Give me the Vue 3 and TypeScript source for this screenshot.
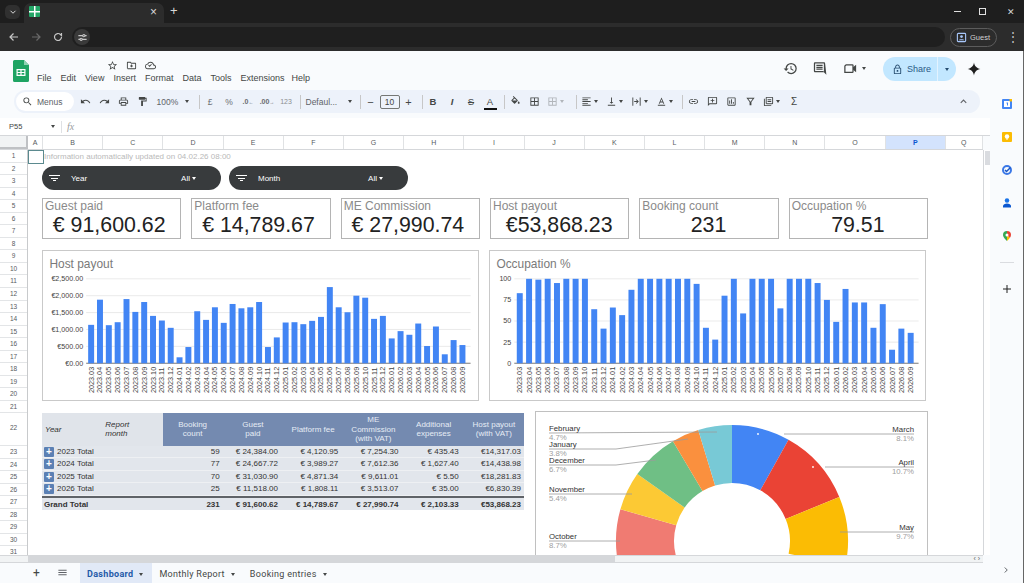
<template>
  <div class="app">
    <!-- browser chrome -->
    <div class="tabstrip">
      <div class="tab-search"><svg viewBox="0 0 24 24" class="ic-chrome"><path d="M6 9l6 6 6-6" class="st" /></svg></div>
      <div class="tab-active">
        <span class="favicon"></span>
        <span class="tab-x">×</span>
      </div>
      <span class="tab-plus">+</span>
      <div class="win-ctrls">
        <span class="win-min"></span>
        <span class="win-max"></span>
        <span class="win-close">✕</span>
      </div>
    </div>
    <div class="browserbar">
      <svg viewBox="0 0 24 24" class="nav-ic"><path d="M20 12H5M11 5l-7 7 7 7" class="st" /></svg>
      <svg viewBox="0 0 24 24" class="nav-ic dim"><path d="M4 12h15M13 5l7 7-7 7" class="st" /></svg>
      <svg viewBox="0 0 24 24" class="nav-ic"><path d="M19 12a7 7 0 1 1-2.2-5.1L19 9V4" class="st" /></svg>
      <div class="omnibox">
        <span class="tune-btn">
          <svg viewBox="0 0 24 24" class="tune"><path d="M3 8h10M17 8h4M3 16h4M11 16h10" class="st" /><circle cx="15" cy="8" r="2.4" class="st" /><circle cx="9" cy="16" r="2.4" class="st" /></svg>
        </span>
      </div>
      <div class="guest">
        <svg viewBox="0 0 24 24" class="guest-ic"><rect x="3" y="3" width="18" height="18" rx="2" class="st" /><circle cx="12" cy="10" r="3" fill="#a8c7fa" /><path d="M6 18c1-3 11-3 12 0" fill="#a8c7fa" /></svg>
        <span>Guest</span>
      </div>
      <span class="kebab">⋮</span>
    </div>

    <div class="page">
      <div class="sheet-app">
        <!-- doc header -->
        <div class="docbar">
          <svg viewBox="0 0 16 22" class="logo">
            <path d="M1.5 0H11l5 5v15.5a1.5 1.5 0 0 1-1.5 1.5h-13A1.5 1.5 0 0 1 0 20.500V1.500A1.500 1.500 0 0 1 1.500 0z" fill="#1fa463" />
            <path d="M11 0l5 5h-5z" fill="#8ed1b1" />
            <path d="M3.500 9h9v7h-9zM4.700 10.200v1.700h2.700v-1.700zm3.900 0v1.700h2.700v-1.700zm-3.900 2.900v1.700h2.700v-1.700zm3.900 0v1.700h2.700v-1.700z" fill="#fff" fill-rule="evenodd" />
          </svg>
          <div class="doc-mid">
            <div class="doc-icons">
              <svg viewBox="0 0 24 24" class="ic"><path :d="icons.star" /></svg>
              <svg viewBox="0 0 24 24" class="ic"><path :d="icons.folder" /></svg>
              <svg viewBox="0 0 24 24" class="ic"><path :d="icons.cloud" /></svg>
            </div>
            <div class="menus">
              <span v-for="m in menus" :key="m">{{ m }}</span>
            </div>
          </div>
          <div class="doc-right">
            <svg viewBox="0 0 24 24" class="ic-lg"><path :d="icons.history" /></svg>
            <svg viewBox="0 0 24 24" class="ic-lg"><path :d="icons.comments" /></svg>
            <span class="meet">
              <svg viewBox="0 0 24 24" class="ic-lg"><path d="M5 6h10a1 1 0 0 1 1 1v10a1 1 0 0 1-1 1H3V8z" fill="none" stroke="#444746" stroke-width="2" /><path d="M16 10l5-4v12l-5-4z" /></svg>
              <i class="caret"></i>
            </span>
            <div class="share">
              <span class="share-main">
                <svg viewBox="0 0 24 24" class="ic-share"><path :d="icons.lock" /></svg>
                Share
              </span>
              <span class="share-drop"><i class="caret"></i></span>
            </div>
            <svg viewBox="0 0 24 24" class="ic-spark"><path d="M12 1c.8 6 5 10.200 11 11-6 .8-10.200 5-11 11-.8-6-5-10.200-11-11 6-.8 10.200-5 11-11z" /></svg>
          </div>
        </div>

        <!-- toolbar -->
        <div class="toolbar">
          <div class="menu-search">
            <svg viewBox="0 0 24 24" class="ic"><path :d="icons.search" /></svg>
            <span>Menus</span>
          </div>
          <span class="tb"><svg viewBox="0 0 24 24" class="ic"><path :d="icons.undo" /></svg></span>
          <span class="tb"><svg viewBox="0 0 24 24" class="ic"><path :d="icons.redo" /></svg></span>
          <span class="tb"><svg viewBox="0 0 24 24" class="ic"><path :d="icons.print" /></svg></span>
          <span class="tb"><svg viewBox="0 0 24 24" class="ic"><path :d="icons.paint" /></svg></span>
          <span class="tb-zoom">100%<i class="caret"></i></span>
          <span class="sep"></span>
          <span class="tb txt">£</span>
          <span class="tb txt">%</span>
          <span class="tb txt small">.0<sub>←</sub></span>
          <span class="tb txt small">.00<sub>→</sub></span>
          <span class="tb txt num">123</span>
          <span class="sep"></span>
          <span class="tb-font">Defaul...<i class="caret"></i></span>
          <span class="sep"></span>
          <span class="tb-step">−</span>
          <span class="size-box">10</span>
          <span class="tb-step">+</span>
          <span class="sep"></span>
          <span class="tb txt bold">B</span>
          <span class="tb txt ital">I</span>
          <span class="tb txt strike">S</span>
          <span class="tb txt color-a">A</span>
          <span class="sep"></span>
          <span class="tb"><svg viewBox="0 0 24 24" class="ic"><path :d="icons.fill" /></svg></span>
          <span class="tb"><svg viewBox="0 0 24 24" class="ic"><path :d="icons.borders" /></svg></span>
          <span class="tb-c dim"><svg viewBox="0 0 24 24" class="ic"><path :d="icons.borders" /></svg><i class="caret"></i></span>
          <span class="sep"></span>
          <span v-for="t in alignTools" :key="t" class="tb-c"><svg viewBox="0 0 24 24" class="ic"><path :d="icons[t]" /></svg><i class="caret"></i></span>
          <span class="sep"></span>
          <span class="tb"><svg viewBox="0 0 24 24" class="ic"><path :d="icons.link" /></svg></span>
          <span class="tb"><svg viewBox="0 0 24 24" class="ic"><path :d="icons.addComment" /></svg></span>
          <span class="tb"><svg viewBox="0 0 24 24" class="ic"><path :d="icons.chart" /></svg></span>
          <span class="tb"><svg viewBox="0 0 24 24" class="ic"><path :d="icons.filter" fill-rule="evenodd" /></svg></span>
          <span class="tb-c"><svg viewBox="0 0 24 24" class="ic"><path :d="icons.views" /></svg><i class="caret"></i></span>
          <span class="tb txt sigma">Σ</span>
          <svg viewBox="0 0 24 24" class="collapse"><path d="M6 15l6-6 6 6" class="st" /></svg>
        </div>

        <!-- formula bar -->
        <div class="formula">
          <span class="name-box">P55</span>
          <i class="caret"></i>
          <span class="fx-sep"></span>
          <span class="fx">fx</span>
        </div>

        <!-- column heads -->
        <div class="colheads">
          <div class="corner"></div>
          <div v-for="c in columns" :key="c" class="colhead" :class="{ selected: c === 'P' }">{{ c }}</div>
        </div>

        <div class="gridarea">
          <div class="rowheads">
            <div v-for="r in 31" :key="r" class="rowhead" :class="{ tall: r === 22 }">{{ r }}</div>
          </div>

          <div class="canvas">
            <div class="a1-cell"></div>
            <div class="note">Information automatically updated on 04.02.26 08:00</div>

            <div class="filters">
              <div v-for="f in filters" :key="f" class="filter-pill">
                <span class="filter-ic"><i></i><i></i><i></i></span>
                <span class="filter-name">{{ f }}</span>
                <span class="filter-val">All<i class="caret white"></i></span>
              </div>
            </div>

            <div class="kpis">
              <div v-for="k in kpis" :key="k.label" class="kpi">
                <div class="kpi-label">{{ k.label }}</div>
                <div class="kpi-value" :class="{ shifted: k.shifted }">{{ k.value }}</div>
              </div>
            </div>

            <div class="charts">
              <div v-for="c in charts" :key="c.title" class="chart-card">
                <svg class="chart-svg" viewBox="0 0 437 150">
                  <text x="6" y="17" class="chart-title">{{ c.title }}</text>
                  <g v-for="t in c.ticks" :key="t.label">
                    <line :x1="c.x0" :x2="c.x1" :y1="t.y" :y2="t.y" :class="t.y === baseY ? 'axis' : 'gridline'" />
                    <text :x="c.x0 - 3" :y="t.y + 2.500" text-anchor="end" class="tick">{{ t.label }}</text>
                  </g>
                  <g v-for="b in c.bars" :key="b.label">
                    <rect :x="b.x - 3" :y="b.y" width="6" :height="baseY - b.y" fill="#4285f4" />
                    <text :transform="`translate(${b.x + 2.500},${baseY + 30}) rotate(-90)`" class="bar-label">{{ b.label }}</text>
                  </g>
                </svg>
              </div>
            </div>

            <div class="bottom">
              <div class="pivot">
                <div class="pv-row pv-head">
                  <div class="pv-light ital">Year</div>
                  <div class="pv-light ital">Report<br />month</div>
                  <div v-for="h in pivotHeads" :key="h" class="pv-dark">{{ h }}</div>
                </div>
                <div v-for="r in pivotRows" :key="r.label" class="pv-row pv-body">
                  <div class="pv-label">
                    <span class="pv-plus">+</span>{{ r.label }}
                  </div>
                  <div v-for="(v, i) in r.values" :key="i" class="pv-num" :class="{ money: i > 0 && i < 5 }">{{ v }}</div>
                </div>
                <div class="pv-row pv-body pv-total">
                  <div class="pv-label">Grand Total</div>
                  <div v-for="(v, i) in pivotTotal" :key="i" class="pv-num" :class="{ money: i > 0 && i < 5 }">{{ v }}</div>
                </div>
              </div>

              <div class="donut-card">
                <svg class="donut-svg" viewBox="0 0 391 178">
                  <path v-for="s in slices" :key="s.color" :d="s.d" :fill="s.color" />
                  <g v-for="l in callouts" :key="l.name">
                    <polyline :points="l.line" fill="none" stroke="#9a9a9a" stroke-width="0.8" />
                    <circle v-if="l.dot" :cx="l.dot[0]" :cy="l.dot[1]" r="0.9" fill="#fff" />
                    <text :x="l.x" :y="l.y - 1.700" :text-anchor="l.anchor" class="dn-name">{{ l.name }}</text>
                    <text :x="l.x" :y="l.y + 7" :text-anchor="l.anchor" class="dn-pct">{{ l.pct }}</text>
                  </g>
                </svg>
              </div>
            </div>
          </div>

          <div class="vscroll">
            <div class="vthumb"></div>
          </div>
        </div>

        <div class="hscroll">
          <div class="hthumb"></div>
          <span class="harrows">‹ ›</span>
        </div>

        <!-- sheet tabs -->
        <div class="sheet-tabs">
          <span class="st-plus">+</span>
          <svg viewBox="0 0 24 24" class="st-menu"><path d="M3 6h18v2H3zm0 5h18v2H3zm0 5h18v2H3z" /></svg>
          <div class="st-tab active">Dashboard<i class="caret"></i></div>
          <div class="st-tab">Monthly Report<i class="caret"></i></div>
          <div class="st-tab">Booking entries<i class="caret"></i></div>
        </div>
      </div>

      <!-- side panel -->
      <div class="side">
        <svg viewBox="0 0 24 24" class="side-ic"><rect x="2" y="2" width="20" height="20" rx="2" fill="#4285f4" /><rect x="6" y="6" width="12" height="12" fill="#fff" /><path d="M17 2h5v5h-5z" fill="#fbbc04" /><path d="M11 9h3v6h-2v-4h-1z" fill="#4285f4" /></svg>
        <svg viewBox="0 0 24 24" class="side-ic"><rect x="2" y="2" width="20" height="20" rx="2" fill="#fbbc04" /><circle cx="12" cy="11" r="4.500" fill="#fff" /><rect x="10" y="15" width="4" height="2" fill="#fff" /></svg>
        <svg viewBox="0 0 24 24" class="side-ic"><circle cx="12" cy="12" r="8" fill="none" stroke="#3b78e7" stroke-width="4" /><path d="M8 12l3 3 8-8" fill="none" stroke="#1a56c4" stroke-width="3" /></svg>
        <svg viewBox="0 0 24 24" class="side-ic"><circle cx="12" cy="7" r="4.500" fill="#1a73e8" /><path d="M4 21v-3c0-3 4-5 8-5s8 2 8 5v3z" fill="#0b57d0" /></svg>
        <svg viewBox="0 0 24 24" class="side-ic"><path d="M12 2a8 8 0 0 0-8 8c0 5 8 12 8 12z" fill="#34a853" /><path d="M12 2a8 8 0 0 1 8 8c0 2-1 4-2.500 6L12 10z" fill="#ea4335" /><path d="M12 22c2-2 4-4 5.500-6L12 10z" fill="#fbbc04" /><circle cx="12" cy="10" r="3" fill="#fff" /></svg>
        <span class="side-div"></span>
        <svg viewBox="0 0 24 24" class="side-plus"><path d="M11 4h2v7h7v2h-7v7h-2v-7H4v-2h7z" /></svg>
        <svg viewBox="0 0 24 24" class="side-more"><path d="M9 6l6 6-6 6" class="st" /></svg>
      </div>
    </div>
  </div>
</template>

<script setup lang="ts">
interface Chart {
  title: string
  x0: number
  x1: number
  ticks: { label: string; y: number }[]
  bars: { label: string; x: number; y: number }[]
}

interface Callout {
  name: string
  pct: string
  x: number
  y: number
  anchor: string
  line: string
  dot?: number[]
}

const icons: Record<string, string> = {
  star: 'M22 9.240l-7.190-.620L12 2 9.190 8.630 2 9.240l5.460 4.730L5.820 21 12 17.270 18.180 21l-1.630-7.030L22 9.240zM12 15.400l-3.760 2.270 1-4.280-3.320-2.880 4.380-.380L12 6.100l1.710 4.040 4.380.380-3.320 2.880 1 4.280L12 15.400z',
  folder: 'M20 6h-8l-2-2H4c-1.100 0-2 .9-2 2v12c0 1.100.9 2 2 2h16c1.100 0 2-.9 2-2V8c0-1.100-.9-2-2-2zm0 12H4V6h5.170l2 2H20v10zM11 10h2v2h2v2h-2v2h-2v-2H9v-2h2z',
  cloud: 'M19.350 10.040A7.490 7.490 0 0 0 12 4C9.110 4 6.600 5.640 5.350 8.040A5.994 5.994 0 0 0 0 14c0 3.310 2.690 6 6 6h13c2.760 0 5-2.240 5-5 0-2.640-2.050-4.780-4.650-4.960zM19 18H6c-2.210 0-4-1.790-4-4 0-2.050 1.530-3.760 3.560-3.970l1.070-.110.5-.950A5.469 5.469 0 0 1 12 6c2.620 0 4.880 1.860 5.390 4.430l.3 1.500 1.530.110A2.980 2.980 0 0 1 22 15c0 1.650-1.350 3-3 3zM10 15l5-5-1.400-1.400L10 12.200 8.400 10.600 7 12z',
  history: 'M13 3a9 9 0 0 0-9 9H1l3.890 3.890.07.140L9 12H6c0-3.870 3.130-7 7-7s7 3.130 7 7-3.130 7-7 7c-1.930 0-3.680-.790-4.940-2.060l-1.420 1.420A8.954 8.954 0 0 0 13 21a9 9 0 0 0 0-18zm-1 5v5l4.250 2.520.770-1.280-3.520-2.090V8z',
  comments: 'M21 4c0-1.100-.9-2-2-2H5c-1.100 0-2 .9-2 2v12c0 1.100.9 2 2 2h14l4 4zM19 4v13.200L17.800 16H5V4zM7 12h10v2H7zm0-3h10v2H7zm0-3h10v2H7z',
  lock: 'M18 8h-1V6c0-2.760-2.240-5-5-5S7 3.240 7 6v2H6c-1.100 0-2 .9-2 2v10c0 1.100.9 2 2 2h12c1.100 0 2-.9 2-2V10c0-1.100-.9-2-2-2zM9 6c0-1.660 1.340-3 3-3s3 1.340 3 3v2H9V6zm9 14H6V10h12v10zm-6-3c1.100 0 2-.9 2-2s-.9-2-2-2-2 .9-2 2 .9 2 2 2z',
  search: 'M15.500 14h-.790l-.280-.270A6.470 6.470 0 0 0 16 9.500 6.500 6.500 0 1 0 9.500 16c1.610 0 3.090-.590 4.230-1.570l.270.280v.790l5 4.990L20.490 19l-4.990-5zm-6 0C7.010 14 5 11.990 5 9.500S7.010 5 9.500 5 14 7.010 14 9.500 11.990 14 9.500 14z',
  undo: 'M12.500 8c-2.650 0-5.050.990-6.900 2.600L2 7v9h9l-3.620-3.620c1.390-1.160 3.160-1.880 5.120-1.880 3.540 0 6.550 2.310 7.600 5.500l2.370-.780C21.080 11.030 17.150 8 12.500 8z',
  redo: 'M18.400 10.600C16.550 8.990 14.150 8 11.500 8c-4.650 0-8.580 3.030-9.960 7.220L3.900 16c1.050-3.190 4.050-5.500 7.600-5.500 1.950 0 3.730.720 5.120 1.880L13 16h9V7l-3.600 3.600z',
  print: 'M19 8h-1V3H6v5H5c-1.660 0-3 1.340-3 3v6h4v4h12v-4h4v-6c0-1.660-1.340-3-3-3zM8 5h8v3H8V5zm8 12v2H8v-4h8v2zm2-2v-2H6v2H4v-4c0-.550.450-1 1-1h14c.550 0 1 .450 1 1v4h-2z',
  paint: 'M18 4V3c0-.550-.450-1-1-1H5c-.550 0-1 .450-1 1v4c0 .550.450 1 1 1h12c.550 0 1-.450 1-1V6h1v4H9v11c0 .550.450 1 1 1h2c.550 0 1-.450 1-1v-9h8V4h-3z',
  fill: 'M16.560 8.940L7.620 0 6.210 1.410l2.380 2.380-5.150 5.150c-.590.590-.590 1.540 0 2.120l5.500 5.500c.290.290.680.440 1.060.440s.770-.150 1.060-.440l5.500-5.500c.590-.580.590-1.530 0-2.120zM5.210 10L10 5.210 14.790 10H5.210zM19 11.500s-2 2.170-2 3.500c0 1.100.9 2 2 2s2-.9 2-2c0-1.330-2-3.500-2-3.500z',
  borders: 'M3 3v18h18V3H3zm8 16H5v-6h6v6zm0-8H5V5h6v6zm8 8h-6v-6h6v6zm0-8h-6V5h6v6z',
  align: 'M3 21h18v-2H3v2zm0-4h12v-2H3v2zm0-4h18v-2H3v2zm0-4h12V7H3v2zm0-6v2h18V3H3z',
  valign: 'M16 13h-3V3h-2v10H8l4 4 4-4zM4 19v2h16v-2H4z',
  wrap: 'M3 3v18h2V3H3zm16 0v18h2V3h-2zM7 11h6.170l-2.580-2.590L12 7l5 5-5 5-1.410-1.410L13.170 13H7v-2z',
  rotate: 'M12 3l-6 14h2l1.300-3h5.400l1.300 3h2L12 3zm-2 9l2-5 2 5h-4zM4 19v2h16v-2H4z',
  link: 'M3.900 12c0-1.710 1.390-3.100 3.100-3.100h4V7H7c-2.760 0-5 2.240-5 5s2.240 5 5 5h4v-1.900H7c-1.710 0-3.100-1.390-3.100-3.100zM8 13h8v-2H8v2zm9-6h-4v1.900h4c1.710 0 3.100 1.390 3.100 3.100s-1.390 3.100-3.100 3.100h-4V17h4c2.760 0 5-2.240 5-5s-2.240-5-5-5z',
  addComment: 'M20 2H4c-1.100 0-2 .9-2 2v18l4-4h14c1.100 0 2-.9 2-2V4c0-1.100-.9-2-2-2zm0 14H5.200L4 17.200V4h16v12zM13 6h-2v3H8v2h3v3h2v-3h3V9h-3z',
  chart: 'M19 3H5c-1.100 0-2 .9-2 2v14c0 1.100.9 2 2 2h14c1.100 0 2-.9 2-2V5c0-1.100-.9-2-2-2zm0 16H5V5h14v14zM7 10h2v7H7zm4-3h2v10h-2zm4 6h2v4h-2z',
  filter: 'M3 4h18l-7 9v7h-4v-7L3 4zm4 2l5 6.500L17 6H7z',
  views: 'M4 6H2v14c0 1.100.9 2 2 2h14v-2H4V6zm16-4H8c-1.100 0-2 .9-2 2v12c0 1.100.9 2 2 2h12c1.100 0 2-.9 2-2V4c0-1.100-.9-2-2-2zm0 14H8V4h12v12zM10 7h8v2h-8zm0 4h8v2h-8z',
}

const menus = ['File', 'Edit', 'View', 'Insert', 'Format', 'Data', 'Tools', 'Extensions', 'Help']
const alignTools = ['align', 'valign', 'wrap', 'rotate']
const columns = 'ABCDEFGHIJKLMNOPQ'.split('')
const filters = ['Year', 'Month']

const kpis = [
  { label: 'Guest paid', value: '€ 91,600.62', shifted: true },
  { label: 'Platform fee', value: '€ 14,789.67', shifted: true },
  { label: 'ME Commission', value: '€ 27,990.74', shifted: true },
  { label: 'Host payout', value: '€53,868.23', shifted: false },
  { label: 'Booking count', value: '231', shifted: false },
  { label: 'Occupation %', value: '79.51', shifted: false },
]

// 图表共用的基线
const baseY = 113
const plotH = 85

const months: string[] = []
for (const [year, from, to] of [[2023, 3, 12], [2024, 1, 12], [2025, 1, 12], [2026, 1, 9]]) {
  for (let m = from; m <= to; m++) months.push(`${year}.${String(m).padStart(2, '0')}`)
}

const payout = [
  1137, 1882, 1127, 1215, 1900, 1520, 1813, 1402, 1265, 1049,
  176, 480, 1540, 1284, 1657, 1196, 1755, 1627, 1657, 1813, 480, 765,
  1206, 1215, 1157, 1255, 1372, 2255, 1657, 1510, 2000, 1941, 1314, 1402,
  735, 951, 843, 1176, 510, 1088, 265, 686, 539,
]
const occupation = [
  83, 100, 99, 100, 95, 100, 100, 100, 64, 41,
  66, 57, 87, 100, 100, 100, 100, 100, 100, 94, 42, 28,
  80, 100, 59, 100, 100, 100, 65, 100, 100, 100, 95, 75,
  49, 88, 72, 72, 42, 70, 16, 41, 36,
]

function buildChart(title: string, values: number[], max: number, tickLabels: string[], x0: number, x1: number, first: number, step: number): Chart {
  return {
    title,
    x0,
    x1,
    ticks: tickLabels.map((label, i) => ({ label, y: baseY - (plotH * i) / (tickLabels.length - 1) })),
    bars: values.map((v, i) => ({ label: months[i], x: first + step * i, y: baseY - (v / max) * plotH })),
  }
}

const charts: Chart[] = [
  buildChart('Host payout', payout, 2500, ['€0.00', '€500.00', '€1,000.00', '€1,500.00', '€2,000.00', '€2,500.00'], 43, 430, 48, 8.9),
  buildChart('Occupation %', occupation, 100, ['0', '25', '50', '75', '100'], 24, 431, 29.5, 9.37),
]

const pivotHeads = ['Booking\ncount', 'Guest\npaid', 'Platform fee', 'ME\nCommission\n(with VAT)', 'Additional\nexpenses', 'Host payout\n(with VAT)']
const pivotRows = [
  { label: '2023 Total', values: ['59', '€ 24,384.00', '€ 4,120.95', '€ 7,254.30', '€ 435.43', '€14,317.03'] },
  { label: '2024 Total', values: ['77', '€ 24,667.72', '€ 3,989.27', '€ 7,612.36', '€ 1,627.40', '€14,438.98'] },
  { label: '2025 Total', values: ['70', '€ 31,030.90', '€ 4,871.34', '€ 9,611.01', '€ 5.50', '€18,281.83'] },
  { label: '2026 Total', values: ['25', '€ 11,518.00', '€ 1,808.11', '€ 3,513.07', '€ 35.00', '€6,830.39'] },
]
const pivotTotal = ['231', '€ 91,600.62', '€ 14,789.67', '€ 27,990.74', '€ 2,103.33', '€53,868.23']

// 环形图：从十月开始顺时针
const cx = 196
const cy = 129
const rOuter = 116
const rInner = 58
const slicesData = [
  { pct: 8.7, color: '#f07b72' },
  { pct: 5.4, color: '#fcc934' },
  { pct: 6.7, color: '#6fbf85' },
  { pct: 3.8, color: '#fa903e' },
  { pct: 4.7, color: '#78c9d6' },
  { pct: 8.1, color: '#4285f4' },
  { pct: 10.7, color: '#ea4335' },
  { pct: 9.7, color: '#fbbc04' },
]

function polar(r: number, deg: number): string {
  const a = (deg * Math.PI) / 180
  return `${(cx + r * Math.sin(a)).toFixed(2)} ${(cy - r * Math.cos(a)).toFixed(2)}`
}

let angle = -(8.7 + 5.4 + 6.7 + 3.8 + 4.7) * 3.6
const slices = slicesData.map((s) => {
  const start = angle
  angle += s.pct * 3.6
  const d = `M${polar(rOuter, start)}A${rOuter} ${rOuter} 0 0 1 ${polar(rOuter, angle)}L${polar(rInner, angle)}A${rInner} ${rInner} 0 0 0 ${polar(rInner, start)}Z`
  return { d, color: s.color }
})

const callouts: Callout[] = [
  { name: 'February', pct: '4.7%', x: 13, y: 21, anchor: 'start', line: '13,21 181,20' },
  { name: 'January', pct: '3.8%', x: 13, y: 37, anchor: 'start', line: '13,37 80,37 152,27' },
  { name: 'December', pct: '6.7%', x: 13, y: 53, anchor: 'start', line: '13,53 80,53 120,48' },
  { name: 'November', pct: '5.4%', x: 13, y: 82, anchor: 'start', line: '13,82 96,82' },
  { name: 'October', pct: '8.7%', x: 13, y: 129, anchor: 'start', line: '13,129 84,129' },
  { name: 'March', pct: '8.1%', x: 378, y: 22, anchor: 'end', line: '378,22 248,22', dot: [222, 22] },
  { name: 'April', pct: '10.7%', x: 378, y: 55, anchor: 'end', line: '378,55 289,55', dot: [277, 55] },
  { name: 'May', pct: '9.7%', x: 378, y: 120, anchor: 'end', line: '378,120 304,120' },
]
</script>

<style>
html,
body {
  margin: 0;
  padding: 0;
  background: #fff;
  overflow: hidden;
}
</style>

<style scoped>
.app {
  width: 1024px;
  height: 583px;
  display: flex;
  flex-direction: column;
  overflow: hidden;
  font-family: "Liberation Sans", Arial, sans-serif;
  color: #444746;
}

.st {
  fill: none;
  stroke: currentColor;
  stroke-width: 2.4;
}

/* 浏览器标签栏 */
.tabstrip {
  height: 23px;
  flex-shrink: 0;
  background: #1e1e1e;
  display: flex;
  align-items: flex-end;
  color: #d8d8d8;
}

.tab-search {
  width: 15px;
  height: 14px;
  margin: 0 4px 4px 5px;
  border-radius: 5px;
  background: #303030;
  display: flex;
  align-items: center;
  justify-content: center;
}

.ic-chrome {
  width: 10px;
  height: 10px;
}

.tab-active {
  width: 140px;
  height: 20px;
  background: #2c2c2c;
  border-radius: 7px 7px 0 0;
  display: flex;
  align-items: center;
  justify-content: space-between;
  padding: 0 7px 3px 5px;
  box-sizing: border-box;
}

.favicon {
  width: 11px;
  height: 11px;
  border-radius: 1px;
  background:
    linear-gradient(#fff, #fff) center / 100% 1.5px no-repeat,
    linear-gradient(#fff, #fff) center / 1.5px 100% no-repeat,
    #23a566;
}

.tab-x {
  font-size: 12px;
  line-height: 12px;
}

.tab-plus {
  font-size: 13px;
  line-height: 13px;
  margin: 0 0 6px 6px;
}

.win-ctrls {
  margin-left: auto;
  width: 70px;
  height: 23px;
  display: flex;
  align-items: center;
  justify-content: space-between;
  padding-right: 9px;
  box-sizing: border-box;
}

.win-min {
  width: 7px;
  height: 1px;
  background: #e0e0e0;
}

.win-max {
  width: 7px;
  height: 7px;
  border: 1px solid #e0e0e0;
  box-sizing: border-box;
  margin-left: -3px;
}

.win-close {
  font-size: 9px;
}

.browserbar {
  height: 28px;
  flex-shrink: 0;
  background: #2c2c2c;
  display: flex;
  align-items: center;
  color: #c7c7c7;
  padding-left: 8px;
  box-sizing: border-box;
}

.nav-ic {
  width: 12px;
  height: 12px;
  margin-right: 10px;
}

.nav-ic.dim {
  opacity: 0.4;
}

.omnibox {
  width: 873px;
  height: 20px;
  margin-left: -2px;
  border-radius: 10px;
  background: #1f1f1f;
  display: flex;
  align-items: center;
}

.tune-btn {
  width: 16px;
  height: 16px;
  margin-left: 2px;
  border-radius: 50%;
  background: #3a3a3a;
  display: flex;
  align-items: center;
  justify-content: center;
}

.tune {
  width: 11px;
  height: 11px;
}

.guest {
  width: 47px;
  height: 19px;
  margin-left: 5px;
  border: 1px solid #5c5c5c;
  border-radius: 10px;
  box-sizing: border-box;
  display: flex;
  align-items: center;
  gap: 3px;
  padding-left: 5px;
  font-size: 7.500px;
  color: #d0d0d0;
}

.guest-ic {
  width: 11px;
  height: 11px;
  color: #a8c7fa;
}

.kebab {
  margin-left: 10px;
  font-size: 12px;
}

.page {
  flex: 1;
  min-height: 0;
  display: flex;
  background: #f9fbfd;
}

.sheet-app {
  width: 990px;
  flex-shrink: 0;
  display: flex;
  flex-direction: column;
}

.ic {
  width: 11px;
  height: 11px;
  fill: #444746;
  flex-shrink: 0;
}

.caret {
  display: inline-block;
  width: 0;
  height: 0;
  border-left: 2.500px solid transparent;
  border-right: 2.500px solid transparent;
  border-top: 3px solid #444746;
  vertical-align: middle;
}

.caret.white {
  border-top-color: #fff;
  margin-left: 2px;
}

/* 文档头部 */
.docbar {
  height: 39px;
  flex-shrink: 0;
  display: flex;
  padding-left: 13px;
  box-sizing: border-box;
}

.logo {
  width: 16px;
  height: 22px;
  margin-top: 9px;
}

.doc-mid {
  margin-left: 8px;
}

.doc-icons {
  display: flex;
  gap: 8px;
  margin: 9px 0 0 70px;
}

.doc-icons .ic {
  width: 11px;
  height: 11px;
}

.menus {
  display: flex;
  gap: 9px;
  font-size: 9px;
  margin-top: 2px;
  color: #444746;
}

.menus span:last-child {
  margin-left: -2px;
}

.doc-right {
  margin-left: auto;
  display: flex;
  align-items: flex-start;
  padding: 6px 6px 0 0;
}

.ic-lg {
  width: 15px;
  height: 15px;
  fill: #444746;
  margin-top: 4px;
  margin-right: 14px;
}

.meet {
  display: flex;
  margin: 0 17px 0 2px;
}

.meet .ic-lg {
  margin-right: 4px;
}

.meet .caret {
  margin-top: 10px;
}

.share {
  width: 73px;
  height: 24px;
  border-radius: 12px;
  background: #c2e7ff;
  display: flex;
  align-items: center;
  font-size: 9px;
  color: #2a5a86;
}

.share-main {
  flex: 1;
  display: flex;
  align-items: center;
  gap: 4px;
  padding-left: 9px;
  border-right: 1px solid #e3f3ff;
  height: 100%;
}

.ic-share {
  width: 11px;
  height: 11px;
  fill: #264d70;
}

.share-drop {
  width: 18px;
  display: flex;
  justify-content: center;
}

.share-drop .caret {
  border-top-color: #264d70;
}

.ic-spark {
  width: 14px;
  height: 14px;
  margin: 5px 3px 0 11px;
  fill: #1f1f1f;
}

/* 工具栏 */
.toolbar {
  height: 23px;
  flex-shrink: 0;
  margin-left: 14px;
  width: 966px;
  background: #edf2fa;
  border-radius: 12px;
  display: flex;
  align-items: center;
  font-size: 8.500px;
}

.menu-search {
  width: 58px;
  height: 19px;
  margin: 0 1.500px 0 2px;
  background: #fff;
  border-radius: 10px;
  display: flex;
  align-items: center;
  gap: 4px;
  padding-left: 6px;
  box-sizing: border-box;
  color: #606368;
}

.tb {
  width: 19px;
  height: 18px;
  display: flex;
  align-items: center;
  justify-content: center;
  flex-shrink: 0;
}

.tb.txt {
  font-size: 8.500px;
  color: #6a6d70;
}

.tb.small {
  font-size: 7px;
  font-weight: 700;
}

.tb.small sub {
  font-size: 5px;
  line-height: 0;
}

.tb.num {
  font-size: 7px;
  color: #8a8d90;
}

.tb.bold {
  font-weight: 700;
  color: #444746;
  font-size: 9.500px;
}

.tb.ital {
  font-style: italic;
  font-weight: 700;
  color: #444746;
  font-size: 9.500px;
}

.tb.strike {
  text-decoration: line-through;
  color: #444746;
  font-size: 9.500px;
}

.tb.color-a {
  color: #444746;
  font-size: 9.500px;
  background: linear-gradient(#111, #111) center 15px / 13px 2px no-repeat;
}

.tb.sigma {
  font-size: 10px;
  color: #444746;
}

.tb-zoom {
  width: 43px;
  display: flex;
  align-items: center;
  justify-content: space-between;
  padding: 0 6px 0 5px;
  box-sizing: border-box;
  color: #606368;
  flex-shrink: 0;
}

.sep {
  width: 1px;
  height: 14px;
  background: #c7c7c7;
  margin: 0 1px 0 4px;
  flex-shrink: 0;
}

.tb-font {
  width: 54px;
  display: flex;
  align-items: center;
  justify-content: space-between;
  padding: 0 4px;
  box-sizing: border-box;
  color: #606368;
  flex-shrink: 0;
}

.tb-step {
  width: 18px;
  text-align: center;
  font-size: 11px;
  flex-shrink: 0;
}

.size-box {
  width: 20px;
  height: 14px;
  border: 1px solid #747775;
  border-radius: 2px;
  box-sizing: border-box;
  display: flex;
  align-items: center;
  justify-content: center;
  font-size: 8.500px;
  flex-shrink: 0;
}

.tb-c {
  width: 25px;
  height: 18px;
  display: flex;
  align-items: center;
  justify-content: flex-start;
  gap: 2px;
  padding-left: 3.500px;
  box-sizing: border-box;
  flex-shrink: 0;
}

.tb-c.dim {
  opacity: 0.35;
  width: 28px;
}

.collapse {
  width: 11px;
  height: 11px;
  margin-left: auto;
  margin-right: 11px;
  color: #606368;
}

/* 公式栏 */
.formula {
  height: 18px;
  margin-top: 5px;
  flex-shrink: 0;
  background: #fff;
  border-bottom: 1px solid #d5d7da;
  box-sizing: border-box;
  display: flex;
  align-items: center;
  font-size: 7.500px;
}

.name-box {
  width: 45px;
  padding-left: 9px;
  box-sizing: border-box;
  flex-shrink: 0;
}

.formula .caret {
  margin-left: 6px;
}

.fx-sep {
  width: 1px;
  height: 12px;
  background: #dfe1e4;
  margin-left: 6px;
}

.fx {
  margin-left: 5px;
  font-style: italic;
  font-family: "Liberation Serif", serif;
  font-size: 10px;
  color: #9a9da0;
}

/* 列头 */
.colheads {
  height: 14px;
  flex-shrink: 0;
  background: #fff;
  display: grid;
  grid-template-columns: 28px 15px repeat(15, 60.200px) 37px;
  border-bottom: 1px solid #d5d7da;
  box-sizing: border-box;
  width: 983px;
}

.corner {
  background: #f1f3f4;
  border-right: 2px solid #bfc1c4;
  border-bottom: 2px solid #bfc1c4;
  box-sizing: border-box;
}

.colhead {
  font-size: 7px;
  line-height: 13px;
  text-align: center;
  color: #575a5e;
  border-right: 1px solid #e0e2e4;
  box-sizing: border-box;
}

.colhead.selected {
  background: #d3e3fd;
  color: #0b57d0;
  font-weight: 700;
}

.gridarea {
  flex: 1;
  min-height: 0;
  display: flex;
  background: #fff;
  overflow: hidden;
}

.rowheads {
  width: 28px;
  flex-shrink: 0;
  border-right: 1px solid #c8cacc;
  box-sizing: border-box;
}

.rowhead {
  height: 12.550px;
  font-size: 6.500px;
  line-height: 12px;
  text-align: center;
  color: #575a5e;
  border-bottom: 1px solid #e3e5e7;
  box-sizing: border-box;
}

.rowhead.tall {
  height: 32.500px;
  line-height: 30px;
}

/* 表格上的浮动内容 */
.canvas {
  position: relative;
  width: 955px;
  flex-shrink: 0;
  padding-left: 14px;
  box-sizing: border-box;
  overflow: hidden;
}

.a1-cell {
  position: absolute;
  left: 0;
  top: 0;
  width: 14px;
  height: 12px;
  border: 1px solid #5b8a8f;
  box-sizing: content-box;
}

.note {
  height: 16px;
  padding-left: 2px;
  font-size: 8px;
  line-height: 13px;
  color: #b9b9b9;
}

.filters {
  display: flex;
  gap: 8px;
}

.filter-pill {
  width: 179px;
  height: 24px;
  background: #383b3d;
  border-radius: 12px;
  display: flex;
  align-items: center;
  color: #fff;
  font-size: 8px;
  padding-left: 7px;
  box-sizing: border-box;
}

.filter-ic {
  width: 11px;
  display: flex;
  flex-direction: column;
  align-items: center;
  gap: 1.500px;
}

.filter-ic i {
  display: block;
  height: 1px;
  background: #fff;
}

.filter-ic i:nth-child(1) {
  width: 11px;
}

.filter-ic i:nth-child(2) {
  width: 7px;
}

.filter-ic i:nth-child(3) {
  width: 3px;
}

.filter-name {
  margin-left: 11px;
}

.filter-val {
  margin-left: auto;
  margin-right: 25px;
}

.kpis {
  display: grid;
  grid-template-columns: repeat(6, 1fr);
  gap: 10px;
  width: 886px;
  margin-top: 8px;
}

.kpi {
  height: 41px;
  border: 1px solid #b4b4b4;
  box-sizing: border-box;
  padding-left: 2px;
}

.kpi-label {
  font-size: 12px;
  line-height: 14px;
  color: #8a8a8a;
}

.kpi-value {
  font-size: 21.330px;
  line-height: 24px;
  padding-right: 3px;
  text-align: center;
  color: #222;
}

.kpi-value.shifted {
  padding-right: 7px;
}

.charts {
  display: grid;
  grid-template-columns: repeat(2, 437px);
  gap: 10px;
  margin-top: 11px;
}

.chart-card {
  height: 151px;
  border: 1px solid #c9c9c9;
  box-sizing: border-box;
  background: #fff;
}

.chart-svg {
  display: block;
  width: 435px;
  height: 149px;
}

.chart-title {
  font-size: 12px;
  fill: #7a7a7a;
}

.tick {
  font-size: 7.200px;
  fill: #444;
}

.bar-label {
  font-size: 7.300px;
  fill: #444;
}

.gridline {
  stroke: #e4e4e4;
  stroke-width: 0.800;
}

.axis {
  stroke: #555;
  stroke-width: 0.800;
}

.bottom {
  display: flex;
  align-items: flex-start;
  gap: 11px;
  margin-top: 10px;
}

/* 数据透视表 */
.pivot {
  width: 482px;
  margin-top: 2px;
  font-size: 8px;
  color: #333;
}

.pv-row {
  display: grid;
  grid-template-columns: repeat(8, 1fr);
}

.pv-head {
  height: 32.500px;
}

.pv-light {
  background: #e0e4ea;
  display: flex;
  align-items: center;
  padding-left: 3px;
  line-height: 9.500px;
  font-size: 8px;
}

.ital {
  font-style: italic;
}

.pv-dark {
  background: #748ab0;
  color: #e6ecf5;
  display: flex;
  align-items: center;
  justify-content: center;
  text-align: center;
  white-space: pre-line;
  line-height: 9.500px;
  font-size: 8px;
}

.pv-body {
  height: 12.550px;
  line-height: 12px;
  background: #e2e6ec;
  border-bottom: 1px solid #eef0f3;
  box-sizing: border-box;
}

.pv-label {
  grid-column: span 2;
  display: flex;
  align-items: center;
  white-space: nowrap;
  padding-left: 2px;
}

.pv-plus {
  width: 10px;
  height: 10px;
  margin-right: 3px;
  background: #5b80b4;
  color: #fff;
  font-size: 10px;
  font-weight: 700;
  line-height: 10px;
  text-align: center;
  border-radius: 1px;
}

.pv-num {
  text-align: right;
  padding-right: 3px;
  white-space: nowrap;
}

.pv-num.money {
  padding-right: 5px;
}

.pv-total {
  height: 14px;
  line-height: 13px;
  font-weight: 700;
  border-top: 2px solid #5f6368;
  border-bottom: none;
}

/* 环形图 */
.donut-card {
  width: 393px;
  height: 180px;
  flex-shrink: 0;
  border: 1px solid #c0c0c0;
  box-sizing: border-box;
}

.donut-svg {
  display: block;
  width: 391px;
  height: 178px;
}

.dn-name {
  font-size: 7.800px;
  fill: #333;
}

.dn-pct {
  font-size: 7.800px;
  fill: #a0a0a0;
}

.vscroll {
  flex: 1;
  border-left: 1px solid #d5d7da;
  padding: 1px 0 0 1px;
}

.vthumb {
  width: 5px;
  height: 14px;
  background: #dadce0;
}

.hscroll {
  height: 8px;
  flex-shrink: 0;
  background: #f1f3f4;
  border-top: 1px solid #d5d7da;
  border-bottom: 1px solid #d5d7da;
  padding-left: 28px;
  width: 983px;
  box-sizing: border-box;
  display: flex;
  align-items: center;
}

.hthumb {
  width: 587px;
  height: 6px;
  background: #d5d7da;
}

.harrows {
  margin-left: auto;
  font-size: 7px;
  line-height: 6px;
  padding-right: 3px;
  color: #606368;
}

/* 工作表标签 */
.sheet-tabs {
  height: 20px;
  flex-shrink: 0;
  display: flex;
  align-items: stretch;
  font-family: Roboto, "Liberation Sans", sans-serif;
  font-size: 9px;
  letter-spacing: 0.300px;
  color: #444746;
}

.st-plus {
  margin-left: 33px;
  font-size: 12px;
  line-height: 20px;
}

.st-menu {
  width: 11px;
  height: 11px;
  margin: 4px 12px 0 17px;
  fill: #606368;
}

.st-tab {
  display: flex;
  align-items: center;
  gap: 6px;
  padding: 2px 7px 0;
  margin-right: 1px;
}

.st-tab.active {
  background: #e1e9f7;
  color: #1f5aa8;
  font-weight: 700;
  margin-right: 0;
  padding-right: 9px;
}

/* 右侧面板 */
.side {
  flex: 1;
  position: relative;
  display: flex;
  flex-direction: column;
  align-items: center;
  padding-top: 47px;
  gap: 21px;
  border-right: 1px solid #666;
  box-sizing: border-box;
}

.side-ic {
  width: 12px;
  height: 12px;
  flex-shrink: 0;
}

.side-div {
  width: 14px;
  height: 1px;
  background: #dadce0;
  margin-top: -1px;
}

.side-plus {
  width: 12px;
  height: 12px;
  margin-top: -1px;
  fill: #222;
}

.side-more {
  position: absolute;
  bottom: 8px;
  left: 11px;
  width: 10px;
  height: 10px;
  color: #606368;
}
</style>
